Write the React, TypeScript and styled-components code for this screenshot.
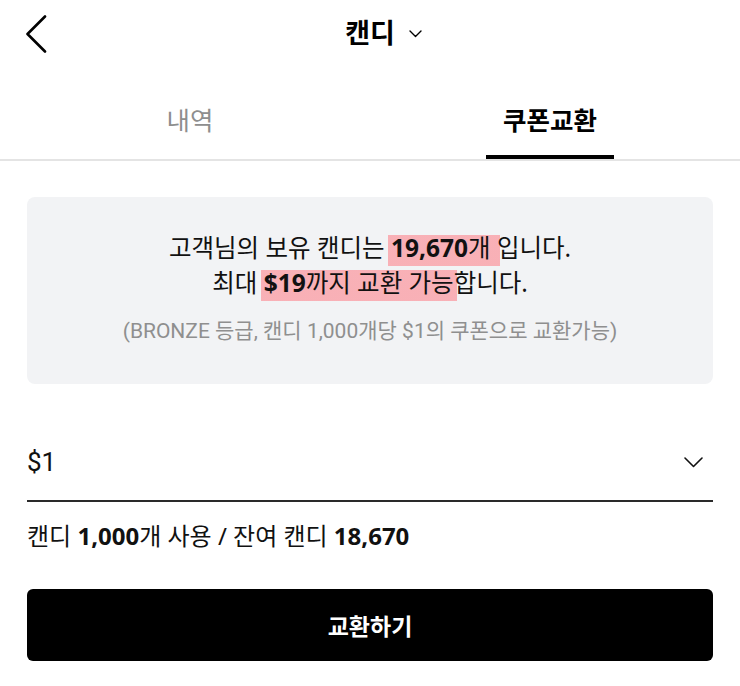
import React from "react";
import styled, { createGlobalStyle } from "styled-components";

const GlobalStyle = createGlobalStyle`
  html, body {
    margin: 0;
    padding: 0;
    background: #ffffff;
  }
  body {
    font-family: "Noto Sans", "Noto Sans CJK KR", sans-serif;
    color: #111111;
    -webkit-font-smoothing: antialiased;
  }
  * { box-sizing: border-box; }
`;

const Page = styled.div`
  width: 740px;
  display: flex;
  flex-direction: column;
`;

const Header = styled.header`
  height: 64px;
  display: grid;
  grid-template-columns: 1fr auto 1fr;
  align-items: center;
`;

const BackButton = styled.button`
  justify-self: start;
  margin-left: 25px;
  margin-top: 4px;
  padding: 0;
  border: 0;
  background: none;
  display: flex;
  align-items: center;
  cursor: pointer;
`;

const Title = styled.h1`
  margin: 0;
  font-family: "Noto Sans CJK KR", sans-serif;
  font-size: 27px;
  font-weight: 700;
  line-height: 1.2;
  color: #000;
`;

const TitleCaret = styled.span`
  justify-self: start;
  margin-left: 14px;
  margin-top: 3px;
  display: flex;
  align-items: center;
`;

const TabBar = styled.nav`
  display: flex;
  padding: 0 10px;
  border-bottom: 2px solid #e4e4e4;
`;

const Tab = styled.div`
  flex: 1;
  display: flex;
  justify-content: center;
`;

const TabLabel = styled.span<{ $active?: boolean }>`
  height: 95px;
  padding: 18px 17px 0;
  display: flex;
  align-items: center;
  font-family: "Noto Sans CJK KR", sans-serif;
  font-size: 25.5px;
  font-weight: ${(p) => (p.$active ? 700 : 400)};
  color: ${(p) => (p.$active ? "#000" : "#8e8e8e")};
  border-bottom: 4px solid ${(p) => (p.$active ? "#000" : "transparent")};
`;

const Content = styled.main`
  padding: 0 27px;
  display: flex;
  flex-direction: column;
`;

const InfoBox = styled.section`
  margin-top: 36px;
  height: 187px;
  padding-top: 33px;
  background: #f2f3f5;
  border-radius: 8px;
  text-align: center;
`;

const InfoLine = styled.p`
  margin: 0;
  font-family: "Noto Sans", "Noto Sans CJK KR", sans-serif;
  font-size: 24.5px;
  line-height: 35px;
  color: #111;
`;

const Mark = styled.span`
  padding: 0 3px 2px;
  margin: 0 -3px;
  background: linear-gradient(
    to bottom,
    transparent 0,
    transparent 12%,
    rgba(255, 110, 120, 0.5) 12%
  );
`;

const Strong = styled.b`
  font-weight: 700;
`;

const Note = styled.p`
  margin: 16px 0 0;
  font-family: Roboto, "Noto Sans CJK KR", sans-serif;
  font-size: 21px;
  line-height: 30px;
  color: #8f8f8f;
`;

const SelectRow = styled.div`
  margin-top: 40px;
  height: 78px;
  padding: 0 10px 0 0;
  display: flex;
  align-items: center;
  justify-content: space-between;
  border-bottom: 2px solid #2a2a2a;
`;

const SelectValue = styled.span`
  font-family: Roboto, "Noto Sans CJK KR", sans-serif;
  font-size: 26px;
  color: #111;
`;

const Usage = styled.p`
  margin: 18px 0 0;
  font-family: "Noto Sans", "Noto Sans CJK KR", sans-serif;
  font-size: 24px;
  line-height: 32px;
  color: #111;
`;

const ExchangeButton = styled.button`
  margin-top: 37px;
  height: 72px;
  width: 100%;
  border: 0;
  border-radius: 6px;
  background: #000;
  color: #fff;
  font-family: "Noto Sans CJK KR", sans-serif;
  font-size: 23px;
  font-weight: 700;
  cursor: pointer;
`;

export default function App() {
  return (
    <>
      <GlobalStyle />
      <Page>
        <Header>
          <BackButton aria-label="뒤로">
            <svg width="22" height="38" viewBox="0 0 22 38" fill="none">
              <polyline
                points="20,1.5 2.5,19 20,36.5"
                stroke="#000"
                strokeWidth="2.6"
                strokeLinecap="round"
                strokeLinejoin="round"
              />
            </svg>
          </BackButton>
          <Title>캔디</Title>
          <TitleCaret>
            <svg width="13" height="8" viewBox="0 0 13 8" fill="none">
              <polyline
                points="1,1 6.5,6.5 12,1"
                stroke="#000"
                strokeWidth="1.4"
                strokeLinecap="round"
                strokeLinejoin="round"
              />
            </svg>
          </TitleCaret>
        </Header>

        <TabBar>
          <Tab>
            <TabLabel>내역</TabLabel>
          </Tab>
          <Tab>
            <TabLabel $active>쿠폰교환</TabLabel>
          </Tab>
        </TabBar>

        <Content>
          <InfoBox>
            <InfoLine>
              고객님의 보유 캔디는{" "}
              <Mark>
                <Strong>19,670</Strong>개{" "}
              </Mark>
              입니다.
            </InfoLine>
            <InfoLine>
              최대{" "}
              <Mark>
                <Strong>$19</Strong>까지 교환 가능
              </Mark>
              합니다.
            </InfoLine>
            <Note>(BRONZE 등급, 캔디 1,000개당 $1의 쿠폰으로 교환가능)</Note>
          </InfoBox>

          <SelectRow>
            <SelectValue>$1</SelectValue>
            <svg width="19" height="11" viewBox="0 0 19 11" fill="none">
              <polyline
                points="1,1 9.5,9.5 18,1"
                stroke="#111"
                strokeWidth="1.6"
                strokeLinecap="round"
                strokeLinejoin="round"
              />
            </svg>
          </SelectRow>

          <Usage>
            캔디 <Strong>1,000</Strong>개 사용 / 잔여 캔디 <Strong>18,670</Strong>
          </Usage>

          <ExchangeButton>교환하기</ExchangeButton>
        </Content>
      </Page>
    </>
  );
}
